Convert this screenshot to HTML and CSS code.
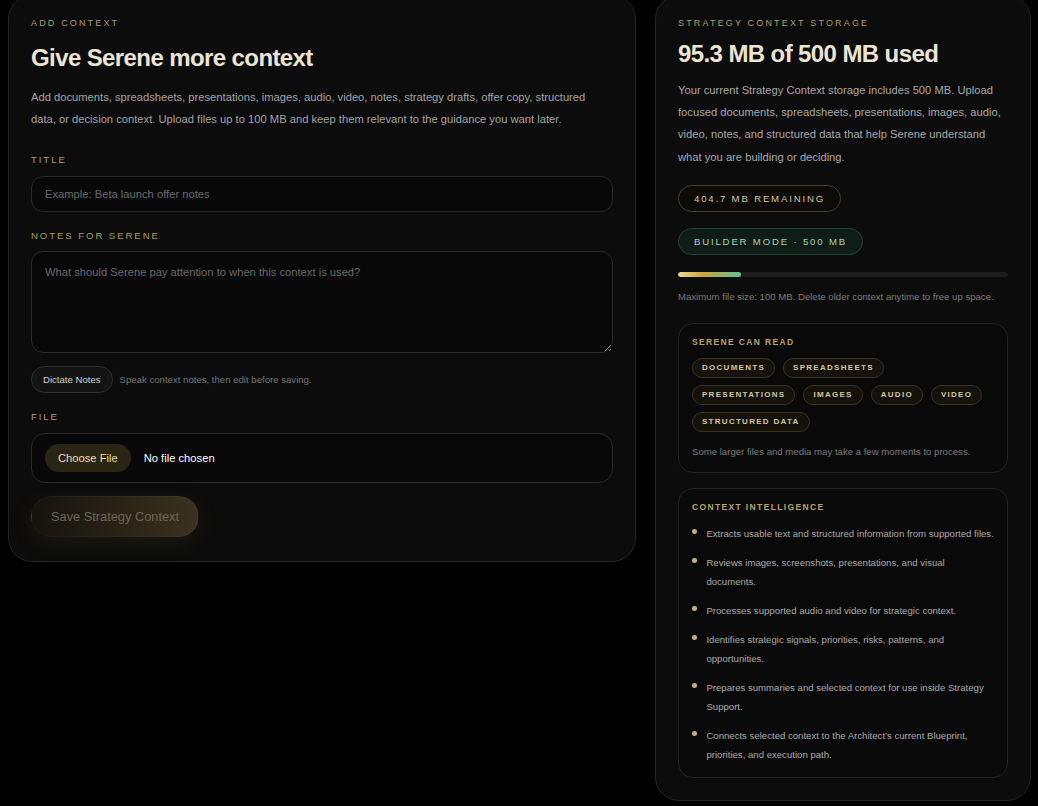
FILE: index.html
```
<!DOCTYPE html>
<html lang="en">
<head>
<meta charset="utf-8">
<title>Strategy Context</title>
<link rel="stylesheet" href="styles.css">
</head>
<body>
<main class="layout">
  <section class="card upload-card">
    <p class="eyebrow">ADD CONTEXT</p>
    <h1 class="headline">Give Serene more context</h1>
    <p class="lead">Add documents, spreadsheets, presentations, images, audio, video, notes, strategy drafts, offer copy, structured data, or decision context. Upload files up to 100 MB and keep them relevant to the guidance you want later.</p>
    <form class="form">
      <div class="field">
        <label class="field-label" for="title">TITLE</label>
        <input id="title" class="text-input" type="text" placeholder="Example: Beta launch offer notes">
      </div>
      <div class="field">
        <label class="field-label" for="notes">NOTES FOR SERENE</label>
        <textarea id="notes" class="text-area" placeholder="What should Serene pay attention to when this context is used?"></textarea>
        <div class="dictate-row">
          <button type="button" class="dictate-btn">Dictate Notes</button>
          <span class="hint">Speak context notes, then edit before saving.</span>
        </div>
      </div>
      <div class="field">
        <span class="field-label">FILE</span>
        <div class="file-box">
          <span class="file-btn">Choose File</span>
          <span class="file-name">No file chosen</span>
        </div>
      </div>
      <button type="button" class="save-btn" disabled>Save Strategy Context</button>
    </form>
  </section>

  <aside class="card storage-card">
    <p class="eyebrow">STRATEGY CONTEXT STORAGE</p>
    <h2 class="headline">95.3 MB of 500 MB used</h2>
    <p class="lead">Your current Strategy Context storage includes 500 MB. Upload focused documents, spreadsheets, presentations, images, audio, video, notes, and structured data that help Serene understand what you are building or deciding.</p>
    <div class="pills">
      <span class="pill pill-gold">404.7 MB REMAINING</span>
      <span class="pill pill-green">BUILDER MODE · 500 MB</span>
    </div>
    <div class="meter"><div class="meter-fill" style="width: 19.06%"></div></div>
    <p class="small-note">Maximum file size: 100 MB. Delete older context anytime to free up space.</p>

    <div class="panel">
      <p class="panel-label">SERENE CAN READ</p>
      <div class="chips">
        <span class="chip">DOCUMENTS</span>
        <span class="chip">SPREADSHEETS</span>
        <span class="chip">PRESENTATIONS</span>
        <span class="chip">IMAGES</span>
        <span class="chip">AUDIO</span>
        <span class="chip">VIDEO</span>
        <span class="chip">STRUCTURED DATA</span>
      </div>
      <p class="panel-note">Some larger files and media may take a few moments to process.</p>
    </div>

    <div class="panel panel-list">
      <p class="panel-label">CONTEXT INTELLIGENCE</p>
      <ul class="bullets">
        <li>Extracts usable text and structured information from supported files.</li>
        <li>Reviews images, screenshots, presentations, and visual documents.</li>
        <li>Processes supported audio and video for strategic context.</li>
        <li>Identifies strategic signals, priorities, risks, patterns, and opportunities.</li>
        <li>Prepares summaries and selected context for use inside Strategy Support.</li>
        <li>Connects selected context to the Architect’s current Blueprint, priorities, and execution path.</li>
      </ul>
    </div>
  </aside>
</main>
</body>
</html>
```

FILE: styles.css
```
* { box-sizing: border-box; }

html, body { background: #000; }

body {
  margin: 0;
  padding: 0 8px 8px;
  font-family: "Liberation Sans", Arial, sans-serif;
  color: #a6a6a6;
}

.layout {
  display: grid;
  grid-template-columns: 628px 376px;
  column-gap: 19px;
  align-items: start;
  margin-top: -5px;
}

.card {
  background: #0c0c0c;
  border: 1px solid #232323;
  border-radius: 24px;
  padding: 22px 22px 24px;
}

.storage-card { padding-bottom: 22px; }

.eyebrow {
  margin: 0 0 15px;
  font-size: 9px;
  line-height: 1.2;
  letter-spacing: 0.24em;
  color: #ab9e67;
}

.storage-card .eyebrow { margin-bottom: 11px; }

.headline {
  margin: 0;
  font-size: 24px;
  line-height: 1.2;
  font-weight: 700;
  letter-spacing: -0.025em;
  color: #ebe5d3;
}

.lead {
  margin: 13px 0 0;
  font-size: 11.2px;
  line-height: 2;
  color: #a3a3a3;
}

.storage-card .lead { margin-top: 10px; color: #a8a8a8; }

/* form */
.form {
  margin-top: 24px;
  display: flex;
  flex-direction: column;
  gap: 18px;
}

.field { display: flex; flex-direction: column; }

.field-label {
  display: block;
  margin-bottom: 10px;
  font-size: 9.6px;
  line-height: 1.2;
  letter-spacing: 0.2em;
  color: #a89b64;
}

.text-input,
.text-area {
  width: 100%;
  background: #080808;
  border: 1px solid #2a2a2a;
  border-radius: 12px;
  font-family: "Liberation Sans", Arial, sans-serif;
  font-size: 11.2px;
  color: #ddd;
  outline: none;
}

.text-input {
  height: 36px;
  padding: 0 13px;
}

.text-area {
  display: block;
  height: 102px;
  padding: 14px 13px;
  resize: vertical;
}

.text-input::placeholder,
.text-area::placeholder { color: #6a6a6a; }

.dictate-row {
  margin-top: 13px;
  display: flex;
  align-items: center;
  gap: 7px;
}

.dictate-btn {
  height: 27px;
  padding: 0 11px;
  background: #141414;
  border: 1px solid #303030;
  border-radius: 999px;
  font-family: "Liberation Sans", Arial, sans-serif;
  font-size: 9.6px;
  color: #cfcfcf;
}

.hint {
  font-size: 9.6px;
  color: #767676;
}

.file-box {
  height: 50px;
  padding: 0 13px;
  display: flex;
  align-items: center;
  background: #080808;
  border: 1px solid #2a2a2a;
  border-radius: 14px;
}

.file-btn {
  height: 28px;
  line-height: 28px;
  padding: 0 13px;
  border-radius: 999px;
  background: #2b2513;
  color: #eadfb2;
  font-size: 11.2px;
}

.file-name {
  margin-left: 13px;
  font-size: 11.2px;
  color: #fff;
}

.save-btn {
  align-self: flex-start;
  margin-top: -4.5px;
  height: 41px;
  padding: 0 19px;
  border: 1px solid rgba(255, 255, 255, 0.03);
  border-radius: 999px;
  background: linear-gradient(90deg, #15130e 0%, #2a2417 55%, #3b321f 100%);
  box-shadow: 0 6px 22px rgba(150, 120, 40, 0.12);
  font-family: "Liberation Sans", Arial, sans-serif;
  font-size: 12.8px;
  color: #6b6658;
}

/* storage */
.pills {
  margin-top: 16.5px;
  display: flex;
  flex-wrap: wrap;
  gap: 16.5px 10px;
}

.pill {
  display: inline-block;
  padding: 7px 15px;
  border-radius: 999px;
  font-size: 9.6px;
  line-height: 11px;
  letter-spacing: 0.19em;
}

.pill-gold {
  background: #0c0b08;
  border: 1px solid #4a3f26;
  color: #d2c8a6;
}

.pill-green {
  background: #0f1c17;
  border: 1px solid #1f4535;
  color: #a9d2c1;
}

.meter {
  margin-top: 17px;
  height: 5px;
  border-radius: 999px;
  background: #1e1e1e;
  overflow: hidden;
}

.meter-fill {
  height: 100%;
  border-radius: 999px;
  background: linear-gradient(90deg, #ead98c 0%, #c9a33a 42%, #62c193 100%);
}

.small-note {
  margin: 14px 0 0;
  font-size: 9.6px;
  line-height: 1.2;
  color: #7b7b7b;
}

.panel {
  margin-top: 20px;
  padding: 13px;
  background: #090909;
  border: 1px solid #232323;
  border-radius: 15px;
}

.panel-list { margin-top: 15px; }

.panel-label {
  margin: 0;
  font-size: 8.5px;
  line-height: 1.2;
  font-weight: 700;
  letter-spacing: 0.16em;
  color: #b6a66c;
}

.chips {
  margin-top: 11px;
  display: flex;
  flex-wrap: wrap;
  gap: 7px 8px;
}

.chip {
  padding: 4px 9px;
  line-height: 10px;
  border-radius: 999px;
  background: #14120b;
  border: 1px solid #3a3320;
  font-size: 8px;
  font-weight: 700;
  letter-spacing: 0.16em;
  color: #d3c79e;
}

.panel-note {
  margin: 12px 0 0;
  font-size: 9.6px;
  line-height: 1.6;
  color: #7c7c7c;
}

.bullets {
  list-style: none;
  margin: 12px 0 0;
  padding: 0;
  display: flex;
  flex-direction: column;
  gap: 9.6px;
}

.bullets li {
  position: relative;
  padding-left: 14.4px;
  font-size: 9.6px;
  line-height: 19.2px;
  color: #a9a9a9;
}

.bullets li::before {
  content: "";
  position: absolute;
  left: 0;
  top: 5px;
  width: 4.5px;
  height: 4.5px;
  border-radius: 50%;
  background: #c4b06e;
}
```
